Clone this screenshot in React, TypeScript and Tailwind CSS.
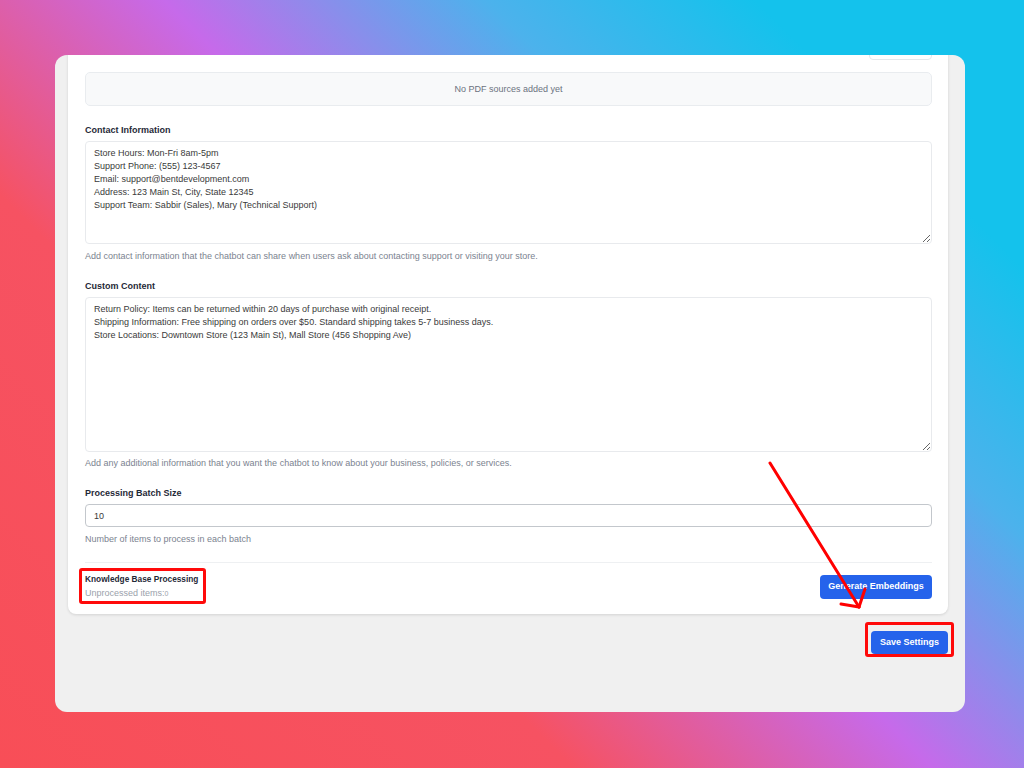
import React from "react"

const contactText = `Store Hours: Mon-Fri 8am-5pm
Support Phone: (555) 123-4567
Email: support@bentdevelopment.com
Address: 123 Main St, City, State 12345
Support Team: Sabbir (Sales), Mary (Technical Support)`

const customText = `Return Policy: Items can be returned within 20 days of purchase with original receipt.
Shipping Information: Free shipping on orders over $50. Standard shipping takes 5-7 business days.
Store Locations: Downtown Store (123 Main St), Mall Store (456 Shopping Ave)`

function Label({ children, className = "" }: { children: React.ReactNode; className?: string }) {
  return <div className={`text-[9px] leading-[12px] font-bold text-[#1f2937] ${className}`}>{children}</div>
}

function Help({ children, className = "" }: { children: React.ReactNode; className?: string }) {
  return <div className={`text-[9px] leading-[12px] text-[#7b8390] ${className}`}>{children}</div>
}

export default function App() {
  return (
    <div
      className="relative w-[1024px] h-[768px] pt-[55px] pl-[55px] bg-[linear-gradient(45deg,#f84e57_0%,#f65262_32%,#c66aea_52%,#4cb2ec_70%,#14c2ec_85%,#14c2ec_100%)]"
      style={{ fontFamily: '"Liberation Sans", Arial, sans-serif' }}
    >
      <div className="w-[910px] h-[657px] rounded-[12px] bg-[#f0f0f0] overflow-hidden pl-[13px] pr-[17px]">
        <div className="-mt-[20px] bg-white rounded-b-[8px] shadow-[0_1px_3px_rgba(0,0,0,0.12)] pl-[17px] pr-[16px] pb-[14px] flex flex-col">
          <div className="self-end w-[63px] h-[25px] rounded-[4px] border border-[#e5e7eb] bg-white" />

          <div className="mt-[12px] h-[34px] pt-[1px] rounded-[5px] border border-[#e9ecef] bg-[#f8f9fa] flex items-center justify-center text-[9px] text-[#6b7280]">
            No PDF sources added yet
          </div>

          <Label className="mt-[18px]">Contact Information</Label>
          <textarea
            readOnly
            defaultValue={contactText}
            className="mt-[5px] h-[103px] w-full rounded-[4px] border border-[#e8eaed] px-[8px] pt-[5px] text-[9px] leading-[13px] text-[#3a3a3a] outline-none"
          />
          <Help className="mt-[6px]">
            Add contact information that the chatbot can share when users ask about contacting support or visiting your store.
          </Help>

          <Label className="mt-[18px]">Custom Content</Label>
          <textarea
            readOnly
            defaultValue={customText}
            className="mt-[5px] h-[155px] w-full rounded-[4px] border border-[#e8eaed] px-[8px] pt-[5px] text-[9px] leading-[13px] text-[#3a3a3a] outline-none"
          />
          <Help className="mt-[5px]">
            Add any additional information that you want the chatbot to know about your business, policies, or services.
          </Help>

          <Label className="mt-[18px]">Processing Batch Size</Label>
          <input
            readOnly
            defaultValue="10"
            className="mt-[5px] h-[23px] w-full rounded-[4px] border border-[#c3c7cc] px-[8px] text-[9px] text-[#3a3a3a] outline-none"
          />
          <Help className="mt-[6px]">Number of items to process in each batch</Help>

          <div className="mt-[17px] border-t border-[#eef0f2] pt-[10px] flex items-center justify-between">
            <div className="relative">
              <div className="text-[8.3px] leading-[12px] font-bold text-[#1f2937]">Knowledge Base Processing</div>
              <div className="mt-[2px] text-[9px] leading-[12px] text-[#9aa1ab]">
                Unprocessed items:<span className="text-[7px]">0</span>
              </div>
              <div className="absolute -left-[6px] -top-[5px] w-[127px] h-[36px] border-[3px] border-[#ff0a0a] rounded-[3px]" />
            </div>
            <button className="w-[112px] h-[24px] rounded-[4px] bg-[#2563eb] text-white text-[9px] font-bold">
              Generate Embeddings
            </button>
          </div>
        </div>

        <div className="mt-[14px] flex justify-end">
          <div className="relative">
            <button className="w-[77px] h-[23px] rounded-[4px] bg-[#2563eb] text-white text-[9px] font-bold">
              Save Settings
            </button>
            <div className="absolute -left-[6px] -top-[6px] w-[89px] h-[35px] border-[3px] border-[#ff0a0a] rounded-[3px]" />
          </div>
        </div>
      </div>

      <svg className="absolute inset-0 pointer-events-none" width="1024" height="768" viewBox="0 0 1024 768">
        <g stroke="#ff0000" strokeWidth="3" strokeLinecap="round" fill="none">
          <line x1="770" y1="463" x2="859" y2="607" />
          <line x1="859" y1="607" x2="841" y2="604" />
          <line x1="859" y1="607" x2="865" y2="589" />
        </g>
      </svg>
    </div>
  )
}
